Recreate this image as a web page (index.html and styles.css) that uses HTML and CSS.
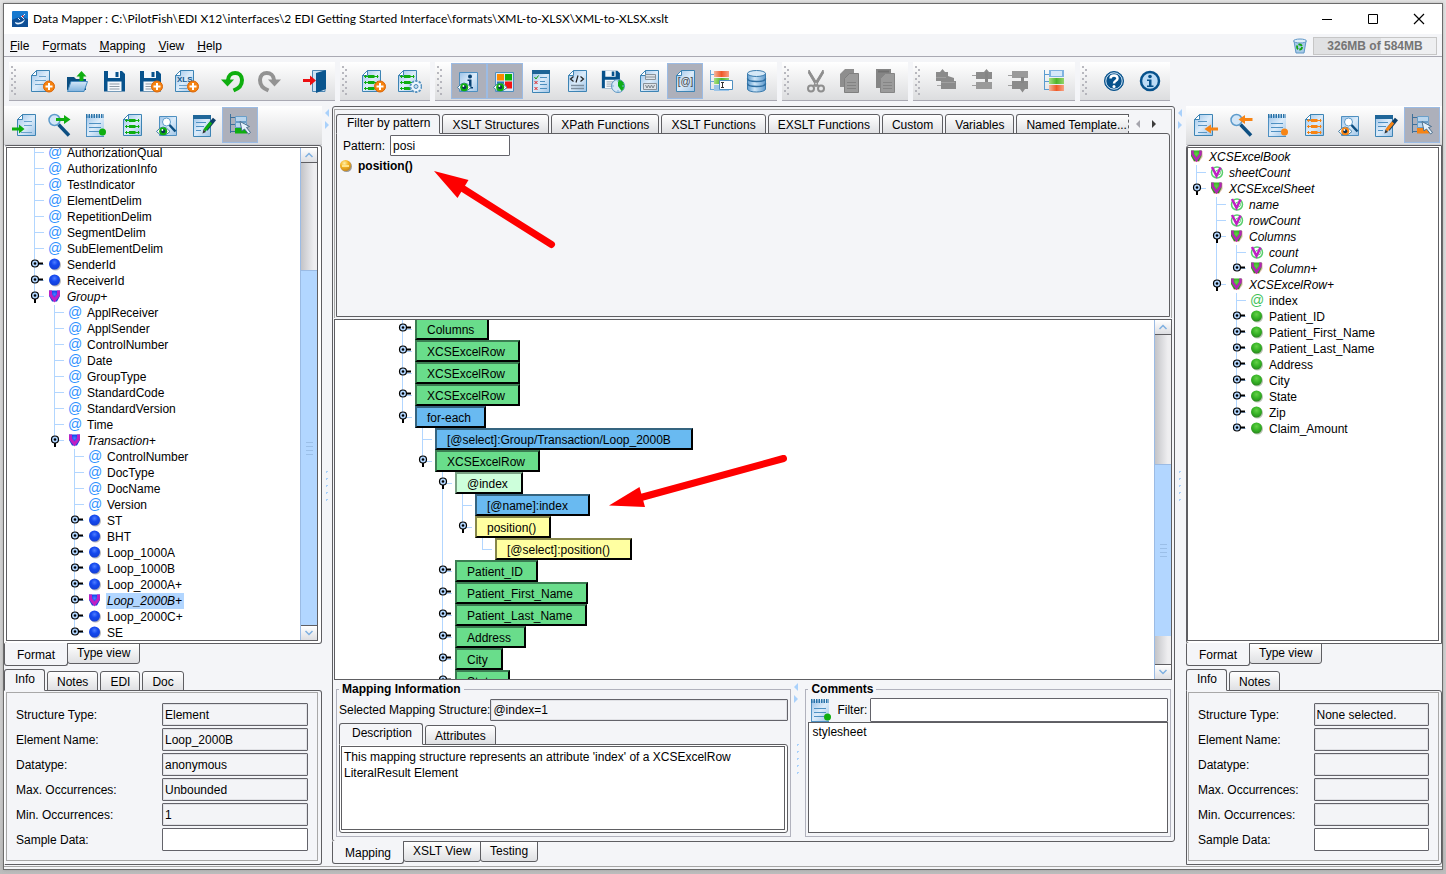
FILE: index.html
```html
<!DOCTYPE html>
<html lang="en">
<head>
<meta charset="utf-8">
<title>Data Mapper</title>
<link rel="stylesheet" href="styles.css">
</head>
<body>
<svg class="sprite" width="0" height="0" aria-hidden="true">
  <defs>
    <linearGradient id="g-page" x1="0" y1="0" x2="1" y2="1"><stop offset="0" stop-color="#9cc3e8"/><stop offset=".5" stop-color="#dcecfa"/><stop offset="1" stop-color="#9fc4e6"/></linearGradient>
    <linearGradient id="g-folder" x1="0" y1="0" x2="0" y2="1"><stop offset="0" stop-color="#d5e8f8"/><stop offset="1" stop-color="#7fb2de"/></linearGradient>
    <linearGradient id="g-db" x1="0" y1="0" x2="1" y2="0"><stop offset="0" stop-color="#5e9ccf"/><stop offset=".4" stop-color="#cfe6f8"/><stop offset="1" stop-color="#5c98cb"/></linearGradient>
    <linearGradient id="g-red" x1="0" y1="0" x2="1" y2="0"><stop offset="0" stop-color="#f3b79f"/><stop offset=".5" stop-color="#f05a28"/><stop offset="1" stop-color="#f7a184"/></linearGradient>
    <linearGradient id="g-green" x1="0" y1="0" x2="1" y2="0"><stop offset="0" stop-color="#a8e082"/><stop offset=".5" stop-color="#4fb52c"/><stop offset="1" stop-color="#93d46b"/></linearGradient>
    <radialGradient id="g-blue" cx=".5" cy=".35" r=".6"><stop offset="0" stop-color="#4d7dff"/><stop offset=".5" stop-color="#1549ee"/><stop offset="1" stop-color="#1440d8"/></radialGradient>
    <radialGradient id="g-leaf" cx=".5" cy=".35" r=".6"><stop offset="0" stop-color="#65d048"/><stop offset=".6" stop-color="#35b325"/><stop offset="1" stop-color="#2c8f20"/></radialGradient>
    <radialGradient id="g-gold" cx=".4" cy=".3" r=".7"><stop offset="0" stop-color="#fff0a8"/><stop offset=".5" stop-color="#f6b422"/><stop offset="1" stop-color="#c98a1c"/></radialGradient>
  </defs>
  <symbol id="page" viewBox="0 0 24 24"><path d="M5.500 1.500H18.500V22.500H.5V6.500Z" fill="url(#g-page)" stroke="#3d84b4"/><path d="M5.500 1.500V6.500H.5Z" fill="#fff" stroke="#3d84b4" stroke-linejoin="round"/></symbol>
  <symbol id="plus" viewBox="0 0 24 24"><circle cx="18" cy="17.500" r="5.500" fill="#f68310" stroke="#d9660a"/><path d="M18 14v7M14.500 17.500h7" stroke="#fff" stroke-width="2"/></symbol>
  <symbol id="disk" viewBox="0 0 24 24"><path d="M1 2H19L22 5V22.500H1Z" fill="#07528c"/><path d="M5 2H17V9H5Z" fill="#f4f8fc"/><path d="M12.500 3H15.500V8H12.500Z" fill="#07528c"/><path d="M4.500 12.500H18.500V22H4.500Z" fill="#f4f8fc"/><path d="M6.500 15H16.500M6.500 17.500H16.500M6.500 20H16.500" stroke="#8d9aa5"/></symbol>
  <symbol id="eye" viewBox="0 0 24 24"><path d="M.5 18.500Q7 9.500 14 18.500Q7 26 .5 18.500Z" fill="#fff" stroke="#3d7ca6"/><circle cx="7.200" cy="18.200" r="4" fill="currentColor"/><circle cx="7.200" cy="18.200" r="2" fill="#0b3355"/><circle cx="6.400" cy="17" r=".9" fill="#fff"/></symbol>
  <symbol id="i-new" viewBox="0 0 24 24"><use href="#page"/><path d="M8 7.500H15M4 11.500H15M4 15.500H13" stroke="#6aa2cd"/><use href="#plus"/></symbol>
  <symbol id="i-open" viewBox="0 0 24 24"><path d="M0 8H7L9 10H19V21H0Z" fill="#0a4d80"/><path d="M4 12.500H20.500L17 22.500H.5Z" fill="url(#g-folder)" stroke="#4a8cbe"/><path d="M14.500 2L19.500 7.500H16.500V12H12.500V7.500H9.500Z" fill="#0fae0f"/></symbol>
  <symbol id="i-save" viewBox="0 0 24 24"><use href="#disk"/></symbol>
  <symbol id="i-saveas" viewBox="0 0 24 24"><use href="#disk"/><use href="#plus"/></symbol>
  <symbol id="undo-arrow" viewBox="0 0 24 24"><path d="M7 11C7.500 1.500 21 1.500 21 11C21 17 18 19 12.500 21.500" fill="none" stroke="currentColor" stroke-width="4"/><path d="M0 10.500H13L6.500 17.500Z" fill="currentColor"/></symbol>
  <symbol id="i-exit" viewBox="0 0 24 24"><path d="M9.500 1.500H22V22.500H9.500Z" fill="#cfe3f4" stroke="#4e87b3"/><path d="M13 4L23 1V20L13 24Z" fill="#0a558e"/><path d="M0 10H7V6.500L13 11.500L7 16.500V13H0Z" fill="#ec0f12"/></symbol>
  <symbol id="i-map" viewBox="0 0 24 24"><use href="#page"/><path d="M2 7.500H16.500M2 13.500H16.500M2 19.500H16.500M3.500 6V9M3.500 12V15M3.500 18V21M15.500 6V9M15.500 12V15M15.500 18V21" stroke="currentColor"/><path d="M6 6H12.500V9H6ZM6 12H12.500V15H6ZM6 18H12.500V21H6Z" fill="currentColor"/></symbol>
  <symbol id="i-mapplus" viewBox="0 0 24 24"><use href="#i-map"/><use href="#plus"/></symbol>
  <symbol id="i-mapgear" viewBox="0 0 24 24"><use href="#i-map"/><circle cx="18" cy="17.500" r="5.500" fill="#edf5fc" stroke="#5a94c0" stroke-dasharray="2.300 1.200" stroke-width="2"/><circle cx="18" cy="17.500" r="4.500" fill="#edf5fc"/><circle cx="18" cy="17.500" r="2" fill="#cde" stroke="#4b89b8"/></symbol>
  <symbol id="i-infoeye" viewBox="0 0 24 24"><path d="M2.500 3.500H20.500V22.500H2.500Z" fill="url(#g-page)" stroke="#4e8fc0"/><circle cx="13" cy="7.500" r="2" fill="#063f70"/><path d="M10.500 10.500H14.500V18H16V19.500H10.500V18H12V12H10.500Z" fill="#063f70"/><use href="#eye"/></symbol>
  <symbol id="i-coloreye" viewBox="0 0 24 24"><path d="M2.500 3.500H20.500V22.500H2.500Z" fill="#d8e8f6" stroke="#4e8fc0"/><path d="M4 5H11V11.500H4Z" fill="#fb8a00"/><path d="M12 5H19V11.500H12Z" fill="#0eb00e"/><path d="M12 12.500H19V19.500H12Z" fill="#f21414"/><path d="M4 12.500H11V19H4Z" fill="#2e75b5"/><use href="#eye"/></symbol>
  <symbol id="i-check" viewBox="0 0 24 24"><path d="M3.500 1.500H20.500V23.500H3.500Z" fill="url(#g-page)" stroke="#3d84b4"/><path d="M3 1H21V5H3Z" fill="#1d6496"/><path d="M11 8.500H18M11 12.500H16M11 15.500H18M11 19.500H18" stroke="#4d8fbf"/><path d="M5.500 8L7 10L9.500 6.500" stroke="#11a011" fill="none"/><path d="M5.500 12L8.500 15M8.500 12L5.500 15M5.500 18L8.500 21M8.500 18L5.500 21" stroke="#e02020"/></symbol>
  <symbol id="i-code" viewBox="0 0 24 24"><g transform="translate(3)"><use href="#page" width="24" height="24"/></g><path d="M8.500 7.500L5.500 10L8.500 12.500M15.500 7.500L18.500 10L15.500 12.500M13 6.500L11 13.500" stroke="#222" fill="none" stroke-width="1.200"/><path d="M6 16.500H19M6 19.500H19" stroke="#7e8f9e" stroke-width="1.500"/></symbol>
  <symbol id="i-saveclock" viewBox="0 0 24 24"><g transform="scale(.86)"><use href="#disk" width="24" height="24"/></g><circle cx="17" cy="17" r="6.500" fill="#d6e8f7" stroke="#5a94c0"/><path d="M17 17V11A6 6 0 0 1 20.500 22Z" fill="#0eae1a"/><path d="M17 10.500V13M17 21V23.500M10.500 17H13M21 17H23.500" stroke="#7fb0d8"/></symbol>
  <symbol id="i-forms" viewBox="0 0 24 24"><g transform="translate(3)"><use href="#page" width="24" height="24"/></g><path d="M8.500 5.500H18.500V10.500H8.500ZM8.500 8H18.500M6.500 14.500H19.500V20.500H6.500Z" stroke="#8a9299" fill="#dde3e8"/><path d="M8.500 16L10 19L11.500 16L13 19L14.500 16L16 19L17.500 16" stroke="#7b858d" fill="none"/></symbol>
  <symbol id="i-rename" viewBox="0 0 24 24"><path d="M1.500 1V21M1.500 5.500H6M1.500 12.500H6M1.500 20.500H6" stroke="#6aa6d6" fill="none"/><path d="M5 2H20V8H5Z" fill="url(#g-red)"/><path d="M5 9H20V15H5Z" fill="url(#g-green)"/><path d="M5 16H20V22H5Z" fill="#9cc5e8"/><path d="M10.500 11.500H23.500V20.500H10.500Z" fill="#fff" stroke="#4e8fc0"/><path d="M12 13.500H15M13.500 13.500V18.500M12 18.500H15" stroke="#333"/></symbol>
  <symbol id="i-db" viewBox="0 0 24 24"><path d="M2.500 4.500V20C2.500 24 20.500 24 20.500 20V4.500Z" fill="url(#g-db)" stroke="#3a7bad"/><ellipse cx="11.500" cy="4.500" rx="9" ry="3" fill="#d5e8f7" stroke="#3a7bad"/><path d="M2.500 9.500C2.500 13.500 20.500 13.500 20.500 9.500M2.500 14.500C2.500 18.500 20.500 18.500 20.500 14.500" fill="none" stroke="#2e6ea2" stroke-width="1.500"/></symbol>
  <symbol id="i-cut" viewBox="0 0 24 24"><path d="M5 1L14.500 16.500L12.500 17.500L4.500 4ZM19 1L9.500 16.500L11.500 17.500L19.500 4Z" fill="#8e8e8e" stroke="#8e8e8e"/><circle cx="7" cy="19.500" r="3" fill="none" stroke="#8e8e8e" stroke-width="2"/><circle cx="17" cy="19.500" r="3" fill="none" stroke="#8e8e8e" stroke-width="2"/></symbol>
  <symbol id="i-copy" viewBox="0 0 24 24"><path d="M5 0H14V18H0V5Z" fill="#8e8e8e"/><path d="M9.500 4.500H18.500V23.500H4.500V9.500Z" fill="#9b9b9b" stroke="#7f7f7f"/><path d="M7 13.500H16M7 16.500H16M7 19.500H16" stroke="#828282"/></symbol>
  <symbol id="i-paste" viewBox="0 0 24 24"><path d="M0 0H15V19H0Z" fill="#858585"/><path d="M2 2.500H13" stroke="#707070" stroke-width="2"/><path d="M9.500 4.500H18.500V23.500H4.500V9.500Z" fill="#9b9b9b" stroke="#858585"/><path d="M7 13.500H16M7 16.500H16M7 19.500H16" stroke="#858585"/></symbol>
  <symbol id="i-moveup" viewBox="0 0 24 24"><path d="M1 3H5L7.500 0L10 3H13V7L19 9V12H21V20H6V12H1Z" fill="#8b8b8b"/><path d="M1 8.500H11M6 13.500H20" stroke="#a0a0a0"/><path d="M2 16.500H6" stroke="#a8a8a8"/></symbol>
  <symbol id="i-moveto" viewBox="0 0 24 24"><path d="M5 3H13L15.500 0L18 3H21V10H5Z" fill="#8b8b8b"/><path d="M5 13H21V20H5Z" fill="#9a9a9a"/><path d="M15.500 3V13" stroke="#858585" stroke-width="3"/><path d="M1 6.500H5M1 16.500H5" stroke="#a0a0a0"/></symbol>
  <symbol id="i-movedown" viewBox="0 0 24 24"><path d="M5 2H21V9H5Z" fill="#9a9a9a"/><path d="M5 12H21V20H18L15.500 23.500L13 20H5Z" fill="#8b8b8b"/><path d="M15.500 8V14" stroke="#858585" stroke-width="3"/><path d="M1 6.500H5M1 16.500H5" stroke="#a0a0a0"/></symbol>
  <symbol id="i-tree" viewBox="0 0 24 24"><path d="M1.500 1V21M1.500 5.500H6M1.500 12.500H6M1.500 20.500H6" stroke="#5a9bd0"/><path d="M6 1H21V8H6Z" fill="#7fb3e0"/><path d="M8 2H19V7H8Z" fill="#d5e8f8"/><path d="M6 9H21V15H6Z" fill="url(#g-green)"/><path d="M6 16H21V22H6Z" fill="url(#g-red)"/></symbol>
  <symbol id="i-help" viewBox="0 0 24 24"><circle cx="12" cy="12" r="9.500" fill="#07528c" stroke="#07528c"/><circle cx="12" cy="12" r="8.200" fill="none" stroke="#d8eafa"/><path d="M8.500 9.500C8.500 5.500 15.500 5.500 15.500 9.500C15.500 12 12 11.500 12 14.500" fill="none" stroke="#fff" stroke-width="2.500"/><circle cx="12" cy="17.500" r="1.500" fill="#fff"/></symbol>
  <symbol id="i-info" viewBox="0 0 24 24"><circle cx="12" cy="12" r="9" fill="#bcdcf6" stroke="#07528c" stroke-width="2.500"/><circle cx="12" cy="7.500" r="1.800" fill="#07528c"/><path d="M9 10.500H13.500V16.500H15.500V18H9V16.500H11V12H9Z" fill="#07528c"/></symbol>
  <symbol id="i-import" viewBox="0 0 24 24"><g transform="translate(5)"><use href="#page" width="24" height="24"/></g><path d="M12 8.500H20M12 12.500H20M9 19.500H20" stroke="#6aa2cd"/><path d="M0 14.500H7V11.500L12.500 16L7 20.500V17.500H0Z" fill="currentColor"/></symbol>
  <symbol id="i-importr" viewBox="0 0 24 24"><use href="#page"/><path d="M4 8.500H13M4 12.500H13M4 19.500H13" stroke="#5a97c6"/><path d="M24 14.500H17V11.500L10.500 16L17 20.500V17.500H24Z" fill="currentColor"/></symbol>
  <symbol id="i-find" viewBox="0 0 24 24"><path d="M10.500 11.500L21 22.500" stroke="#0d4f82" stroke-width="3.500"/><circle cx="6.500" cy="7" r="5.500" fill="#d3e6f7" stroke="#5d9bcb" stroke-width="1.500"/><path d="M8 5H16V2L22.500 6.500L16 11V8H8Z" fill="currentColor"/></symbol>
  <symbol id="i-findr" viewBox="0 0 24 24"><path d="M10.500 11.500L21 22.500" stroke="#0d4f82" stroke-width="3.500"/><circle cx="6.500" cy="7" r="5.500" fill="#d3e6f7" stroke="#5d9bcb" stroke-width="1.500"/><path d="M22.500 5H15V2L8.500 6.500L15 11V8H22.500Z" fill="currentColor"/></symbol>
  <symbol id="i-note" viewBox="0 0 24 24"><path d="M2 2.500H20V23.500H2Z" fill="url(#g-page)"/><path d="M2.500 3V23.500" stroke="#4e90c2"/><path d="M2 23.500H20" stroke="#4e90c2"/><path d="M2 3H20" stroke="#2872a8" stroke-width="4" stroke-dasharray="1.500 1"/><path d="M5 10.500H17M5 14.500H17M5 18.500H15" stroke="#4e90c2"/><circle cx="18.500" cy="19" r="3.500" fill="currentColor"/></symbol>
  <symbol id="i-mapc" viewBox="0 0 24 24"><g transform="translate(3)"><use href="#i-map" width="24" height="24"/></g></symbol>
  <symbol id="i-look" viewBox="0 0 24 24"><path d="M3.500 3.500H20.500V22.500H3.500Z" fill="url(#g-page)" stroke="#4e8fc0"/><circle cx="10.500" cy="9" r="4" fill="#fff" stroke="#5d9bcb"/><path d="M13.500 12L19.500 18.500" stroke="#0d4f82" stroke-width="2.500"/><use href="#eye"/></symbol>
  <symbol id="i-edit" viewBox="0 0 24 24"><path d="M1.500 2.500H18.500V23.500H1.500Z" fill="url(#g-page)" stroke="#3d84b4"/><path d="M1 2H19V6H1Z" fill="#1f6699"/><path d="M4 9.500H14M4 13.500H12M4 17.500H9" stroke="#4e90c2"/><path d="M22.500 6L14 16.500" stroke="#0d3f68" stroke-width="4"/><path d="M19 9.500L12.500 17.500" stroke="currentColor" stroke-width="3"/><path d="M14 19L10.500 20.500L11.500 16.500Z" fill="#333"/></symbol>
  <symbol id="i-pick" viewBox="0 0 24 24"><path d="M2.500 1V20M2.500 4.500H8M2.500 11.500H8M2.500 18.500H8" stroke="#3f719b" fill="none"/><path d="M7.500 3.500H18.500V8.500H7.500ZM7.500 9.500H18.500V14.500H7.500Z" fill="#b9d5ed" stroke="#6a9fc9"/><path d="M7 15H19V20.500H7Z" fill="currentColor"/><path d="M12 8.500L14 18L16.500 16L20.500 21L22.500 19.500L18.500 14.500L21.500 13.500Z" fill="#e5f1fb" stroke="#4b6f8e"/></symbol>
  <symbol id="h-closed" viewBox="0 0 20 16"><path d="M14 6.500H18" stroke="#000" stroke-width="2"/><circle cx="10" cy="6.500" r="3.500" fill="#b2d6ff" stroke="#000" stroke-width="1.200"/><circle cx="10" cy="6.500" r="1.300"/></symbol>
  <symbol id="h-open" viewBox="0 0 20 16"><path d="M10 10V14" stroke="#000" stroke-width="2"/><circle cx="10" cy="6.500" r="3.500" fill="#b2d6ff" stroke="#000" stroke-width="1.200"/><circle cx="10" cy="6.500" r="1.300"/></symbol>
  <symbol id="n-blue" viewBox="0 0 20 16"><circle cx="10.500" cy="8" r="5.500" fill="#b9b9b9"/><circle cx="9.500" cy="7" r="5.500" fill="url(#g-blue)"/></symbol>
  <symbol id="n-green" viewBox="0 0 20 16"><circle cx="10.500" cy="8" r="5.500" fill="#b9c4b4"/><circle cx="9.500" cy="7" r="5.500" fill="url(#g-leaf)"/></symbol>
  <symbol id="n-vblue" viewBox="0 0 20 16"><path d="M4 1.500H15V7L12 12.500H7L4 7Z" fill="url(#g-blue)"/><path d="M5.500 1.500V6L9.500 11L13.500 6V1.500" stroke="#bf1fc4" stroke-width="3" fill="none"/></symbol>
  <symbol id="n-vgreen" viewBox="0 0 20 16"><path d="M4.500 2H15.500V8L12 13H7L4.500 8Z" fill="#e0b7a8"/><path d="M4 1.500H14.500V7L12 12H7L4 7Z" fill="url(#g-leaf)"/><path d="M5.500 1.500V5L9.500 11L13.500 5V1.500" stroke="#b424b4" stroke-width="2.500" fill="none"/></symbol>
  <symbol id="n-vat" viewBox="0 0 20 16"><circle cx="10" cy="7.500" r="5.500" fill="#fff" stroke="#58cf6c" stroke-width="1.500"/><circle cx="11" cy="7.500" r="2.500" fill="none" stroke="#58cf6c"/><path d="M5 2L9.500 11L13.500 2.500" stroke="#bf1fc4" stroke-width="2.500" fill="none"/></symbol>
  <symbol id="n-gold" viewBox="0 0 14 14"><circle cx="7.500" cy="7.500" r="5.500" fill="#999"/><circle cx="6.500" cy="6.500" r="5.500" fill="url(#g-gold)"/><path d="M3 7H10" stroke="#ffe48a" stroke-width="2"/></symbol>
  <symbol id="s-arrows" viewBox="0 0 6 20"><path d="M5 0V8L1 4ZM1 12V20L5 16Z" fill="#a9d1fb"/></symbol>
  <symbol id="s-dots" viewBox="0 0 3 30"><path d="M0 0H2V1H1V2H0ZM0 7H2V8H1V9H0ZM0 14H2V15H1V16H0ZM0 21H2V22H1V23H0ZM0 28H2V29H1V30H0Z" fill="#a9d1fb"/></symbol>
  <symbol id="s-up" viewBox="0 0 10 6"><path d="M1.500 5L5 1.500L8.500 5" fill="none" stroke="#7fb0e0" stroke-width="1.500"/></symbol>
  <symbol id="s-down" viewBox="0 0 10 6"><path d="M1.500 1L5 4.500L8.500 1" fill="none" stroke="#7fb0e0" stroke-width="1.500"/></symbol>
</svg>

<div class="window">
  <header class="titlebar">
    <svg class="app-icon" viewBox="0 0 16 16"><rect width="16" height="16" rx="1" fill="#1779cf"/><path d="M0 9Q8 4 16 8V16H0Z" fill="#0e4f96"/><path d="M3 11Q7 13 11 10L13 8Q12 13 6 13.500Q3 13 3 11Z" fill="#e8f4ff"/><path d="M6 7L8 9M9 5L12 8M13 3L11 5" stroke="#e8f4ff"/><path d="M10 4.500H11.500V6H10Z" fill="#e22"/></svg>
    <h1 class="title">Data Mapper : C:\PilotFish\EDI X12\interfaces\2 EDI Getting Started Interface\formats\XML-to-XLSX\XML-to-XLSX.xslt</h1>
    <button class="win-btn" aria-label="Minimize"><svg viewBox="0 0 12 12"><path d="M1 6.500H11" stroke="#000"/></svg></button>
    <button class="win-btn" aria-label="Maximize"><svg viewBox="0 0 12 12"><path d="M1.500 1.500H10.500V10.500H1.500Z" stroke="#000" fill="none"/></svg></button>
    <button class="win-btn" aria-label="Close"><svg viewBox="0 0 12 12"><path d="M1 1L11 11M11 1L1 11" stroke="#000" stroke-width="1.200"/></svg></button>
  </header>

  <nav class="menubar">
    <button class="menu"><u>F</u>ile</button>
    <button class="menu">F<u>o</u>rmats</button>
    <button class="menu"><u>M</u>apping</button>
    <button class="menu"><u>V</u>iew</button>
    <button class="menu"><u>H</u>elp</button>
    <button class="trash" aria-label="Free memory"><svg viewBox="0 0 16 16"><path d="M2 3L4 15H12L14 3Z" fill="#a9cbe8" stroke="#5f97c7"/><ellipse cx="8" cy="3" rx="6.500" ry="2" fill="#dfeefa" stroke="#5f97c7"/><circle cx="7.500" cy="9" r="2.500" fill="none" stroke="#12a512" stroke-width="1.800" stroke-dasharray="4 1.200"/></svg></button>
    <div class="memory">326MB of 584MB</div>
  </nav>

  <div class="toolbars">
    <div class="toolbar"><span class="grip"></span>
      <button class="tool" aria-label="New"><svg><use href="#i-new"/></svg></button><button class="tool" aria-label="Open"><svg><use href="#i-open"/></svg></button><button class="tool" aria-label="Save"><svg><use href="#i-save"/></svg></button><button class="tool" aria-label="Save as"><svg><use href="#i-saveas"/></svg></button><button class="tool" aria-label="Excel"><svg viewBox="0 0 24 24"><use href="#page" width="24" height="24"/><text x="2" y="13" class="svg-xls">XLS</text><path d="M4 16.500H12M4 19.500H12" stroke="#6aa2cd"/><use href="#plus" width="24" height="24"/></svg></button><span class="tool-gap"></span><button class="tool undo" aria-label="Undo"><svg><use href="#undo-arrow"/></svg></button><button class="tool redo" aria-label="Redo"><svg viewBox="0 0 24 24"><g transform="matrix(-1 0 0 1 24 0)"><use href="#undo-arrow" width="24" height="24"/></g></svg></button><span class="tool-gap"></span><button class="tool" aria-label="Exit"><svg><use href="#i-exit"/></svg></button>
    </div>
    <div class="toolbar"><span class="grip"></span>
      <button class="tool" aria-label="Add mapping"><svg><use href="#i-mapplus"/></svg></button><button class="tool" aria-label="Mapping settings"><svg><use href="#i-mapgear"/></svg></button>
    </div>
    <div class="toolbar"><span class="grip"></span>
      <button class="tool on" aria-label="Show info"><svg><use href="#i-infoeye"/></svg></button><button class="tool on" aria-label="Show colors"><svg><use href="#i-coloreye"/></svg></button><button class="tool" aria-label="Validate"><svg><use href="#i-check"/></svg></button><button class="tool" aria-label="Code"><svg><use href="#i-code"/></svg></button><button class="tool" aria-label="Autosave"><svg><use href="#i-saveclock"/></svg></button><button class="tool" aria-label="Forms"><svg><use href="#i-forms"/></svg></button><button class="tool on" aria-label="Attributes view"><svg viewBox="0 0 24 24"><use href="#page" x="3" width="24" height="24"/><text x="12.500" y="16" text-anchor="middle" class="svg-at">[@]</text></svg></button><button class="tool" aria-label="Rename"><svg><use href="#i-rename"/></svg></button><button class="tool" aria-label="Database"><svg><use href="#i-db"/></svg></button>
    </div>
    <div class="toolbar"><span class="grip"></span>
      <button class="tool" aria-label="Cut"><svg><use href="#i-cut"/></svg></button><button class="tool" aria-label="Copy"><svg><use href="#i-copy"/></svg></button><button class="tool" aria-label="Paste"><svg><use href="#i-paste"/></svg></button>
    </div>
    <div class="toolbar"><span class="grip"></span>
      <button class="tool" aria-label="Move out"><svg><use href="#i-moveup"/></svg></button><button class="tool" aria-label="Move up"><svg><use href="#i-moveto"/></svg></button><button class="tool" aria-label="Move down"><svg><use href="#i-movedown"/></svg></button><button class="tool" aria-label="Tree"><svg><use href="#i-tree"/></svg></button>
    </div>
    <div class="toolbar"><span class="grip"></span>
      <button class="tool" aria-label="Help"><svg><use href="#i-help"/></svg></button><button class="tool" aria-label="About"><svg><use href="#i-info"/></svg></button>
    </div>
  </div>

  <main class="workspace">
    <section class="side source">
      <div class="side-toolbar">
        <button class="tool" aria-label="Import"><svg><use href="#i-import"/></svg></button><button class="tool" aria-label="Find"><svg><use href="#i-find"/></svg></button><button class="tool" aria-label="Notes"><svg><use href="#i-note"/></svg></button><button class="tool" aria-label="Mappings"><svg><use href="#i-mapc"/></svg></button><button class="tool" aria-label="Inspect"><svg><use href="#i-look"/></svg></button><button class="tool" aria-label="Edit"><svg><use href="#i-edit"/></svg></button><button class="tool on" aria-label="Pick"><svg><use href="#i-pick"/></svg></button>
      </div>
      <div class="tree-frame">
        <div class="tree-box">
          <div class="tree-view scrolled">
            <ul class="tree">
              <li><ul>
                <li><div class="row leaf"><span class="at">@</span><span class="label">AuthorizationQual</span></div></li>
                <li><div class="row leaf"><span class="at">@</span><span class="label">AuthorizationInfo</span></div></li>
                <li><div class="row leaf"><span class="at">@</span><span class="label">TestIndicator</span></div></li>
                <li><div class="row leaf"><span class="at">@</span><span class="label">ElementDelim</span></div></li>
                <li><div class="row leaf"><span class="at">@</span><span class="label">RepetitionDelim</span></div></li>
                <li><div class="row leaf"><span class="at">@</span><span class="label">SegmentDelim</span></div></li>
                <li><div class="row leaf"><span class="at">@</span><span class="label">SubElementDelim</span></div></li>
                <li><div class="row"><svg><use href="#h-closed"/></svg><svg><use href="#n-blue"/></svg><span class="label">SenderId</span></div></li>
                <li><div class="row"><svg><use href="#h-closed"/></svg><svg><use href="#n-blue"/></svg><span class="label">ReceiverId</span></div></li>
                <li><div class="row"><svg><use href="#h-open"/></svg><svg><use href="#n-vblue"/></svg><span class="label mapped">Group+</span></div>
                  <ul>
                    <li><div class="row leaf"><span class="at">@</span><span class="label">ApplReceiver</span></div></li>
                    <li><div class="row leaf"><span class="at">@</span><span class="label">ApplSender</span></div></li>
                    <li><div class="row leaf"><span class="at">@</span><span class="label">ControlNumber</span></div></li>
                    <li><div class="row leaf"><span class="at">@</span><span class="label">Date</span></div></li>
                    <li><div class="row leaf"><span class="at">@</span><span class="label">GroupType</span></div></li>
                    <li><div class="row leaf"><span class="at">@</span><span class="label">StandardCode</span></div></li>
                    <li><div class="row leaf"><span class="at">@</span><span class="label">StandardVersion</span></div></li>
                    <li><div class="row leaf"><span class="at">@</span><span class="label">Time</span></div></li>
                    <li><div class="row"><svg><use href="#h-open"/></svg><svg><use href="#n-vblue"/></svg><span class="label mapped">Transaction+</span></div>
                      <ul>
                        <li><div class="row leaf"><span class="at">@</span><span class="label">ControlNumber</span></div></li>
                        <li><div class="row leaf"><span class="at">@</span><span class="label">DocType</span></div></li>
                        <li><div class="row leaf"><span class="at">@</span><span class="label">DocName</span></div></li>
                        <li><div class="row leaf"><span class="at">@</span><span class="label">Version</span></div></li>
                        <li><div class="row"><svg><use href="#h-closed"/></svg><svg><use href="#n-blue"/></svg><span class="label">ST</span></div></li>
                        <li><div class="row"><svg><use href="#h-closed"/></svg><svg><use href="#n-blue"/></svg><span class="label">BHT</span></div></li>
                        <li><div class="row"><svg><use href="#h-closed"/></svg><svg><use href="#n-blue"/></svg><span class="label">Loop_1000A</span></div></li>
                        <li><div class="row"><svg><use href="#h-closed"/></svg><svg><use href="#n-blue"/></svg><span class="label">Loop_1000B</span></div></li>
                        <li><div class="row"><svg><use href="#h-closed"/></svg><svg><use href="#n-blue"/></svg><span class="label">Loop_2000A+</span></div></li>
                        <li><div class="row"><svg><use href="#h-closed"/></svg><svg><use href="#n-vblue"/></svg><span class="label mapped selected">Loop_2000B+</span></div></li>
                        <li><div class="row"><svg><use href="#h-closed"/></svg><svg><use href="#n-blue"/></svg><span class="label">Loop_2000C+</span></div></li>
                        <li><div class="row"><svg><use href="#h-closed"/></svg><svg><use href="#n-blue"/></svg><span class="label">SE</span></div></li>
                      </ul>
                    </li>
                  </ul>
                </li>
              </ul></li>
            </ul>
          </div>
          <div class="scrollbar"><button class="scroll-btn" aria-label="Scroll up"><svg><use href="#s-up"/></svg></button><span class="before"></span><span class="thumb"></span><button class="scroll-btn" aria-label="Scroll down"><svg><use href="#s-down"/></svg></button></div>
        </div>
      </div>
      <div class="tabs bottom"><button class="tab active">Format</button><button class="tab">Type view</button></div>
      <div class="tabs top info-tabs"><button class="tab active">Info</button><button class="tab">Notes</button><button class="tab">EDI</button><button class="tab">Doc</button></div>
      <div class="info-frame"><div class="info">
        <label for="s1">Structure Type:</label><input id="s1" readonly value="Element">
        <label for="s2">Element Name:</label><input id="s2" readonly value="Loop_2000B">
        <label for="s3">Datatype:</label><input id="s3" readonly value="anonymous">
        <label for="s4">Max. Occurrences:</label><input id="s4" readonly value="Unbounded">
        <label for="s5">Min. Occurrences:</label><input id="s5" readonly value="1">
        <label for="s6">Sample Data:</label><input id="s6">
      </div></div>
    </section>

    <div class="splitter"><svg class="split-arrows"><use href="#s-arrows"/></svg><svg class="split-dots"><use href="#s-dots"/></svg></div>

    <section class="center">
      <div class="center-body">
        <div class="palette">
          <div class="tabs top palette-tabs">
            <button class="tab active">Filter by pattern</button><button class="tab">XSLT Structures</button><button class="tab">XPath Functions</button><button class="tab">XSLT Functions</button><button class="tab">EXSLT Functions</button><button class="tab">Custom</button><button class="tab">Variables</button><button class="tab cut">Named Template...</button>
            <button class="tab-scroll" aria-label="Previous tabs"><svg viewBox="0 0 4 8"><path d="M4 0V8L0 4Z" fill="#a5a5ad"/></svg></button><button class="tab-scroll" aria-label="Next tabs"><svg viewBox="0 0 4 8"><path d="M0 0V8L4 4Z" fill="#3c3c3c"/></svg></button>
          </div>
          <div class="palette-body">
            <div class="pattern"><label for="pattern">Pattern:</label><input id="pattern" value="posi"></div>
            <div class="match"><svg><use href="#n-gold"/></svg><b>position()</b></div>
          </div>
        </div>
        <div class="tree-box mapping-box">
          <div class="tree-view">
            <ul class="tree mapping">
              <li><div class="row"><svg><use href="#h-closed"/></svg><span class="node el">Columns</span></div></li>
              <li><div class="row"><svg><use href="#h-closed"/></svg><span class="node el">XCSExcelRow</span></div></li>
              <li><div class="row"><svg><use href="#h-closed"/></svg><span class="node el">XCSExcelRow</span></div></li>
              <li><div class="row"><svg><use href="#h-closed"/></svg><span class="node el">XCSExcelRow</span></div></li>
              <li><div class="row"><svg><use href="#h-open"/></svg><span class="node xsl">for-each</span></div>
                <ul>
                  <li><div class="row leaf"><span class="node xsl attr">[@select]:Group/Transaction/Loop_2000B</span></div></li>
                  <li><div class="row"><svg><use href="#h-open"/></svg><span class="node el">XCSExcelRow</span></div>
                    <ul>
                      <li><div class="row"><svg><use href="#h-open"/></svg><span class="node at-el">@index</span></div>
                        <ul>
                          <li><div class="row leaf"><span class="node xsl attr">[@name]:index</span></div></li>
                          <li><div class="row"><svg><use href="#h-open"/></svg><span class="node fn">position()</span></div>
                            <ul><li><div class="row leaf"><span class="node fn attr">[@select]:position()</span></div></li></ul>
                          </li>
                        </ul>
                      </li>
                      <li><div class="row"><svg><use href="#h-closed"/></svg><span class="node el">Patient_ID</span></div></li>
                      <li><div class="row"><svg><use href="#h-closed"/></svg><span class="node el">Patient_First_Name</span></div></li>
                      <li><div class="row"><svg><use href="#h-closed"/></svg><span class="node el">Patient_Last_Name</span></div></li>
                      <li><div class="row"><svg><use href="#h-closed"/></svg><span class="node el">Address</span></div></li>
                      <li><div class="row"><svg><use href="#h-closed"/></svg><span class="node el">City</span></div></li>
                      <li><div class="row"><svg><use href="#h-closed"/></svg><span class="node el">State</span></div></li>
                    </ul>
                  </li>
                </ul>
              </li>
            </ul>
          </div>
          <div class="scrollbar mid"><button class="scroll-btn" aria-label="Scroll up"><svg><use href="#s-up"/></svg></button><span class="before"></span><span class="thumb"></span><span class="after"></span><button class="scroll-btn" aria-label="Scroll down"><svg><use href="#s-down"/></svg></button></div>
        </div>
        <div class="details">
          <fieldset class="group">
            <legend>Mapping Information</legend>
            <div class="field-row"><label for="sel">Selected Mapping Structure:</label><input id="sel" readonly value="@index=1"></div>
            <div class="tabs top desc-tabs"><button class="tab active">Description</button><button class="tab">Attributes</button></div>
            <div class="desc-frame"><textarea class="desc" aria-label="Description">This mapping structure represents an attribute 'index' of a XCSExcelRow LiteralResult Element</textarea></div>
          </fieldset>
          <div class="splitter inner"><svg class="split-arrows"><use href="#s-arrows"/></svg><svg class="split-dots"><use href="#s-dots"/></svg></div>
          <fieldset class="group">
            <legend>Comments</legend>
            <div class="field-row comments-row"><button class="note-btn" aria-label="Add comment"><svg><use href="#i-note"/></svg></button><label for="filter">Filter:</label><input id="filter"></div>
            <div class="comment-list">stylesheet</div>
          </fieldset>
        </div>
        <svg class="callout first" viewBox="0 0 122 80"><path d="M0 0L34.500 9L23.500 27Z" fill="#fe0000"/><path d="M28 17L117.500 73.500" stroke="#fe0000" stroke-width="7" stroke-linecap="round"/></svg>
        <svg class="callout second" viewBox="0 0 180 54"><path d="M0 50.500L30.500 32L36 52Z" fill="#fe0000"/><path d="M32 42.500L174.500 3.500" stroke="#fe0000" stroke-width="7" stroke-linecap="round"/></svg>
      </div>
      <div class="tabs bottom"><button class="tab active">Mapping</button><button class="tab">XSLT View</button><button class="tab">Testing</button></div>
    </section>

    <div class="splitter"><svg class="split-arrows"><use href="#s-arrows"/></svg><svg class="split-dots"><use href="#s-dots"/></svg></div>

    <section class="side target">
      <div class="side-toolbar">
        <button class="tool" aria-label="Import"><svg><use href="#i-importr"/></svg></button><button class="tool" aria-label="Find"><svg><use href="#i-findr"/></svg></button><button class="tool" aria-label="Notes"><svg><use href="#i-note"/></svg></button><button class="tool" aria-label="Mappings"><svg><use href="#i-mapc"/></svg></button><button class="tool" aria-label="Inspect"><svg><use href="#i-look"/></svg></button><button class="tool" aria-label="Edit"><svg><use href="#i-edit"/></svg></button><button class="tool on" aria-label="Pick"><svg><use href="#i-pick"/></svg></button>
      </div>
      <div class="tree-frame">
        <div class="tree-box">
          <div class="tree-view">
            <ul class="tree green">
              <li><div class="row root"><svg><use href="#n-vgreen"/></svg><span class="label mapped">XCSExcelBook</span></div>
                <ul>
                  <li><div class="row leaf"><svg><use href="#n-vat"/></svg><span class="label mapped">sheetCount</span></div></li>
                  <li><div class="row"><svg><use href="#h-open"/></svg><svg><use href="#n-vgreen"/></svg><span class="label mapped">XCSExcelSheet</span></div>
                    <ul>
                      <li><div class="row leaf"><svg><use href="#n-vat"/></svg><span class="label mapped">name</span></div></li>
                      <li><div class="row leaf"><svg><use href="#n-vat"/></svg><span class="label mapped">rowCount</span></div></li>
                      <li><div class="row"><svg><use href="#h-open"/></svg><svg><use href="#n-vgreen"/></svg><span class="label mapped">Columns</span></div>
                        <ul>
                          <li><div class="row leaf"><svg><use href="#n-vat"/></svg><span class="label mapped">count</span></div></li>
                          <li><div class="row"><svg><use href="#h-closed"/></svg><svg><use href="#n-vgreen"/></svg><span class="label mapped">Column+</span></div></li>
                        </ul>
                      </li>
                      <li><div class="row"><svg><use href="#h-open"/></svg><svg><use href="#n-vgreen"/></svg><span class="label mapped">XCSExcelRow+</span></div>
                        <ul>
                          <li><div class="row leaf"><span class="at">@</span><span class="label">index</span></div></li>
                          <li><div class="row"><svg><use href="#h-closed"/></svg><svg><use href="#n-green"/></svg><span class="label">Patient_ID</span></div></li>
                          <li><div class="row"><svg><use href="#h-closed"/></svg><svg><use href="#n-green"/></svg><span class="label">Patient_First_Name</span></div></li>
                          <li><div class="row"><svg><use href="#h-closed"/></svg><svg><use href="#n-green"/></svg><span class="label">Patient_Last_Name</span></div></li>
                          <li><div class="row"><svg><use href="#h-closed"/></svg><svg><use href="#n-green"/></svg><span class="label">Address</span></div></li>
                          <li><div class="row"><svg><use href="#h-closed"/></svg><svg><use href="#n-green"/></svg><span class="label">City</span></div></li>
                          <li><div class="row"><svg><use href="#h-closed"/></svg><svg><use href="#n-green"/></svg><span class="label">State</span></div></li>
                          <li><div class="row"><svg><use href="#h-closed"/></svg><svg><use href="#n-green"/></svg><span class="label">Zip</span></div></li>
                          <li><div class="row"><svg><use href="#h-closed"/></svg><svg><use href="#n-green"/></svg><span class="label">Claim_Amount</span></div></li>
                        </ul>
                      </li>
                    </ul>
                  </li>
                </ul>
              </li>
            </ul>
          </div>
        </div>
      </div>
      <div class="tabs bottom"><button class="tab active">Format</button><button class="tab">Type view</button></div>
      <div class="tabs top info-tabs"><button class="tab active">Info</button><button class="tab">Notes</button></div>
      <div class="info-frame"><div class="info">
        <label for="t1">Structure Type:</label><input id="t1" readonly value="None selected.">
        <label for="t2">Element Name:</label><input id="t2" readonly>
        <label for="t3">Datatype:</label><input id="t3" readonly>
        <label for="t4">Max. Occurrences:</label><input id="t4" readonly>
        <label for="t5">Min. Occurrences:</label><input id="t5" readonly>
        <label for="t6">Sample Data:</label><input id="t6">
      </div></div>
    </section>
  </main>
</div>
</body>
</html>
```
FILE: styles.css
```css
:root {
  --bg: #f4f5f8;
  --line: #5e5e62;
  --soft: #a9a9b3;
  --blue: #b2d6ff;
}

* { box-sizing: border-box; }

body {
  margin: 0;
  height: 100vh;
  padding: 3px 3px 4px;
  display: flex;
  background: linear-gradient(#e4e4e4, #cdcdcd 90%, #bdbdbd);
  font: 12px/16px "Liberation Sans", Arial, sans-serif;
  color: #000;
}

button, input, textarea { font: inherit; color: inherit; margin: 0; }
button { border: 0; padding: 0; background: none; white-space: nowrap; }
svg { display: block; flex: none; }
.sprite { position: absolute; }

.window {
  flex: 1;
  min-width: 0;
  display: flex;
  flex-direction: column;
  border: 1px solid #6b6b6b;
  background: var(--bg);
  box-shadow: 0 0 3px #8888;
}

/* Title bar */
.titlebar { display: flex; align-items: center; height: 30px; padding-left: 8px; background: #fff; }
.app-icon { width: 16px; height: 16px; }
.title { flex: 1; margin: 0 0 0 5px; font: 12px/16px Lato, "Open Sans", sans-serif; white-space: nowrap; }
.win-btn { width: 46px; height: 30px; display: grid; place-items: center; }
.win-btn svg { width: 12px; height: 12px; }

/* Menu bar */
.menubar { display: flex; align-items: center; gap: 13px; height: 23px; padding: 2px 5px 0 6px; border-bottom: 1px solid var(--soft); }
.trash { margin-left: auto; }
.trash svg { width: 16px; height: 16px; }
.memory {
  width: 124px;
  margin-left: -8px;
  border: 1px solid #c6c6c6;
  background: linear-gradient(90deg, #e0e1e3 55%, #eeeff1 55%);
  color: #757575;
  font-weight: bold;
  text-align: center;
}

/* Toolbars */
.toolbars { display: flex; gap: 5px; padding: 5px; }
.toolbar, .side-toolbar { display: flex; height: 39px; padding: 1px 2px 0 0; border-bottom: 1px solid var(--soft); background: linear-gradient(#fff, #dcdddf); }
.side-toolbar { padding-left: 2px; border-bottom-color: #cfd0d4; }
.grip {
  width: 6px;
  height: 30px;
  margin: 3px 8px 0 2px;
  background:
    conic-gradient(from 270deg at 2px 2px, #a9a9b1 90deg, transparent 0) 0 0 / 6px 6px,
    conic-gradient(from 270deg at 2px 2px, #a9a9b1 90deg, transparent 0) 3px 3px / 6px 6px;
  opacity: .8;
}
.tool { width: 36px; height: 36px; padding: 6px; color: #0fae0f; }
.tool svg { width: 24px; height: 24px; }
.tool.on { background: #adb0bb; box-shadow: inset 0 0 0 1px #9bbbe4; }
.tool.redo { color: #939393; }
.tool-gap { width: 10px; }
.target .tool { color: #f78414; }
.svg-xls { font: bold 8px "Liberation Sans", Arial, sans-serif; fill: #13598d; }
.svg-at { font: 10px "Liberation Sans", Arial, sans-serif; fill: #444; }

/* Workspace */
.workspace {
  flex: 1;
  min-height: 0;
  display: grid;
  grid-template-columns: minmax(0, 318fr) 10px minmax(0, 843fr) 11px minmax(0, 256fr);
  grid-template-rows: minmax(0, 1fr);
  padding-bottom: 1px;
  border-bottom: 1px solid #a6a6a6;
  margin-bottom: 2px;
}
.side, .center { display: flex; flex-direction: column; min-width: 0; min-height: 0; }
.center { padding-bottom: 1px; }
.splitter { display: flex; flex-direction: column; align-items: center; justify-content: center; position: relative; }
.split-arrows { position: absolute; top: 3px; left: 2px; width: 6px; height: 20px; }
.split-dots { width: 3px; height: 30px; }

/* Tree panels */
.tree-frame { flex: 1; min-height: 0; display: flex; padding: 1px 3px 2px 1px; border: 1px solid var(--line); border-left-color: #fff; border-radius: 3px; background: #fff; }
.target .tree-frame { padding-right: 2px; border-left-color: var(--line); padding-left: 0; border-radius: 3px 0 0 3px; }
.tree-box { flex: 1; min-width: 0; min-height: 0; display: flex; border: 1px solid var(--line); background: #fff; }
.tree-view { flex: 1; min-width: 0; overflow: hidden; }
.tree, .tree ul { list-style: none; margin: 0; padding: 0; }
.tree { margin-left: -2px; }
.tree.green { margin-left: -1px; padding-top: 1px; }
.scrolled .tree { margin-top: -3px; }
.tree ul { padding-left: 20px; }
.tree > li > ul { padding-left: 0; }
.scrolled .tree > li > ul { padding-left: 20px; }
.tree li { position: relative; }
.tree li li::before, .mapping > li::before { content: ""; position: absolute; left: 9px; top: 0; bottom: 0; width: 1px; background: var(--blue); }
.tree li li:last-child::before, .mapping > li:last-child::before { bottom: auto; height: 8px; }
.row { position: relative; display: flex; align-items: center; height: 16px; background: linear-gradient(var(--blue), var(--blue)) 10px 7px / 9px 1px no-repeat; }
.row.root { background: none; }
.row.leaf { padding-left: 20px; }
.row svg, .at { width: 20px; height: 16px; }
.at { flex: none; color: #2f92ff; font-size: 14px; line-height: 14px; text-align: center; }
.green .at { color: #3fc258; }
.label { padding: 0 2px 0 1px; margin-left: 1px; line-height: 16px; white-space: nowrap; }
.mapped { font-style: italic; }
.selected { background: var(--blue); }

/* Scroll bars */
.scrollbar { width: 17px; flex: none; display: flex; flex-direction: column; border-left: 1px solid #9bbbe4; background: linear-gradient(90deg, #c3c4c8, #eeeef0 80%); }
.scroll-btn { height: 15px; display: grid; place-items: center; border-bottom: 1px solid var(--line); background: linear-gradient(#fff, #dddee2); }
.scroll-btn:last-child { border-top: 1px solid var(--line); border-bottom: 0; }
.scroll-btn svg { width: 10px; height: 6px; }
.before { flex: 107; }
.thumb {
  flex: 354;
  background: linear-gradient(#9bbfe8, #9bbfe8) center calc(50% - 6px) / 7px 1px no-repeat, linear-gradient(#9bbfe8, #9bbfe8) center calc(50% - 2px) / 7px 1px no-repeat, linear-gradient(#9bbfe8, #9bbfe8) center calc(50% + 2px) / 7px 1px no-repeat, linear-gradient(#9bbfe8, #9bbfe8) center calc(50% + 6px) / 7px 1px no-repeat, var(--blue);
  border-top: 1px solid #9bbbe4;
}
.mid .before { flex: 130; }
.mid .thumb { flex: 172; }
.mid .after { flex: 28; }

/* Tabs */
.tabs { display: flex; position: relative; z-index: 1; }
.tab { height: 20px; padding: 0 9px; border: 1px solid var(--line); background: linear-gradient(#fff, #dfe0e3); }
.top { align-items: flex-end; gap: 2px; margin-bottom: -1px; }
.top .tab { border-radius: 3px 3px 0 0; padding-top: 1px; }
.top .active { height: 22px; padding: 0 9px 2px 10px; border-bottom-color: var(--bg); background: var(--bg); }
.bottom { align-items: flex-start; margin-top: -1px; }
.bottom .tab { height: 21px; margin-left: -1px; border-radius: 0 0 3px 3px; padding-bottom: 1px; }
.bottom .active { height: 23px; margin-left: 0; padding: 1px 12px 0; border-top-color: var(--bg); background: var(--bg); }

/* Info panels */
.info-tabs { margin-top: 3px; }
.info-frame { padding: 1px 3px 3px 1px; border: 1px solid var(--line); border-left-color: #fff; border-radius: 0 3px 3px 0; }
.target .info-frame { border-left-color: var(--line); padding-right: 2px; }
.info { display: grid; grid-template-columns: 1fr 1fr; align-items: center; align-content: start; gap: 2px 0; height: 169px; padding: 10px 9px; border: 1px solid #a8a8a8; }
input { min-width: 0; height: 23px; padding: 0 2px; border: 1px solid #63636a; border-radius: 1px; background: #fff; outline: 0; }
input[readonly] { background: #f3f4f7; box-shadow: inset 0 0 0 1px #e0e1e5; }

/* Center */
.center-body { position: relative; flex: 1; min-height: 0; display: flex; flex-direction: column; padding: 2px 2px 4px 1px; border: 1px solid var(--line); border-radius: 3px; }
.palette { flex: 203; min-height: 0; display: flex; flex-direction: column; margin-bottom: 1px; padding: 4px 0 1px 1px; border: 1px solid #a8a8a8; border-bottom: 0; }
.palette-tabs .active { height: 20px; }
.palette-tabs .cut { border-right-style: dashed; padding-right: 1px; border-radius: 3px 0 0 0; }
.tab-scroll { align-self: center; padding: 0 5px; }
.tab-scroll svg { width: 4px; height: 8px; }
.palette-body { flex: 1; border: 1px solid var(--line); border-radius: 0 3px 0 0; margin-right: 1px; padding: 1px 2px; }
.pattern { display: flex; align-items: center; padding-left: 4px; gap: 5px; }
.pattern input { width: 120px; height: 21px; }
.match { display: flex; align-items: center; gap: 5px; }
.match svg { width: 14px; height: 14px; }
.match b { line-height: 20px; }

.mapping-box { flex: 358; }
.mapping { margin: -2px 0 0 58px; }
.mapping .row { height: 22px; background-position: 10px 11px; }
.mapping li ul { padding-left: 20px; }
.mapping > li > ul { padding-left: 20px; }
.mapping li:last-child::before, .mapping li li:last-child::before { height: 12px; }
.mapping .row.leaf { padding-left: 22px; }
.mapping .row svg { margin-right: 2px; }
.node { height: 22px; padding: 2px 13px 0 10px; border: 2px solid; border-color: #3b7d52 #000 #000 #3b7d52; line-height: 17px; white-space: nowrap; }
.node.attr { padding-right: 20px; }
.el { background: #69dd8b; }
.xsl { background: #69baf1; border-color: #35647f #000 #000 #35647f; }
.fn { background: #ffffa1; border-color: #86864a #000 #000 #86864a; }
.at-el { background: #cdffdb; border-color: #79a184 #000 #000 #79a184; }

/* Details */
.details { height: 157px; flex: none; display: grid; grid-template-columns: minmax(0, 456fr) 14px minmax(0, 366fr); padding: 0 1px 0 2px; }
.group { min-width: 0; margin: 1px 0 0; padding: 0 2px 3px; border: 1px solid #b1b2bd; display: flex; flex-direction: column; }
.group legend { padding: 0 3px; font-weight: bold; }
.field-row { display: flex; align-items: center; margin-top: 2px; }
.field-row input { flex: 1; height: 22px; }
.desc-tabs { margin-top: 2px; }
.desc-tabs .active { padding: 0 10px 2px 12px; }
.desc-frame { flex: 1; display: flex; padding: 1px 2px 2px 1px; border: 1px solid var(--line); border-radius: 0 3px 3px 3px; background: #fff; }
.desc { flex: 1; resize: none; border: 1px solid var(--line); padding: 2px; outline: 0; border-radius: 0; background: #fff; overflow: hidden; }
.comments-row label { margin: 0 3px 0 4px; }
.comments-row { padding-left: 1px; margin-top: 1px; }
.comments-row input { height: 24px; }
.note-btn { color: #0fae0f; }
.note-btn svg { width: 24px; height: 24px; }
.comment-list { flex: 1; padding: 1px 3px; border: 1px solid var(--line); background: #fff; }

/* Callout arrows over the center pane */
.callout { position: absolute; z-index: 2; }
.first { left: 101px; top: 64px; width: 122px; height: 80px; }
.second { left: 276px; top: 348px; width: 180px; height: 54px; }
```
